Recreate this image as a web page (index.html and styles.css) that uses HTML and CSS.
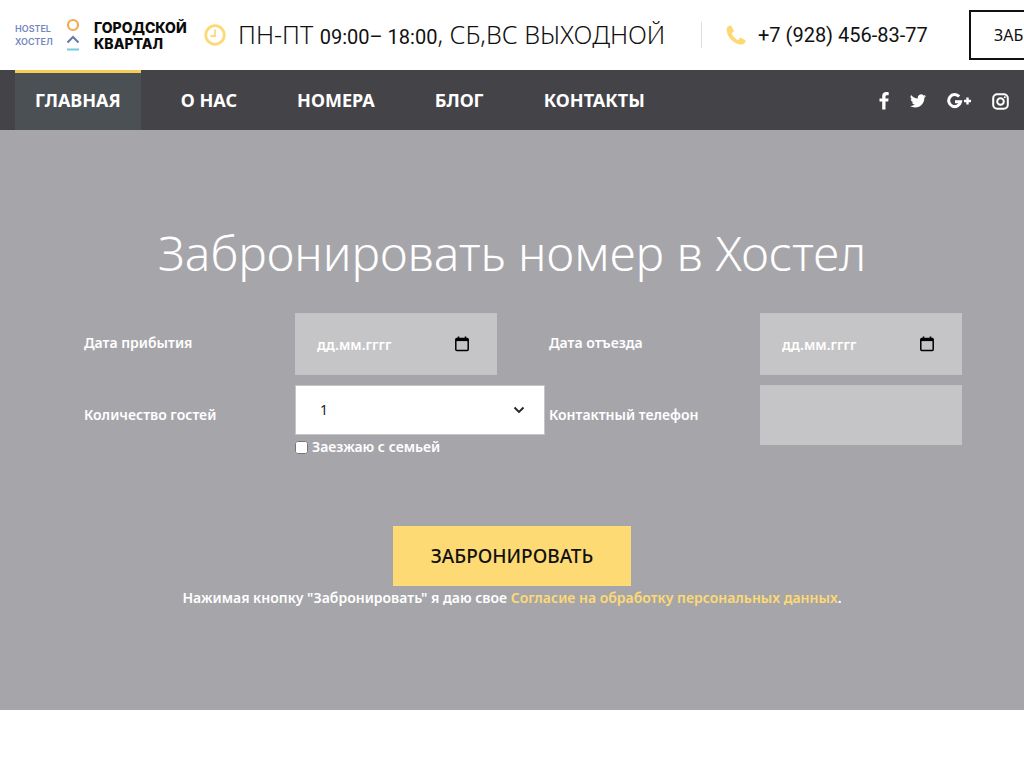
FILE: index.html
```html
<!DOCTYPE html>
<html lang="ru">
<head>
<meta charset="utf-8">
<meta name="viewport" content="width=device-width, initial-scale=1">
<title>Городской квартал</title>
<link rel="stylesheet" href="styles.css">
</head>
<body>
<header class="topbar">
  <a class="logo" href="#">
    <span class="logo-small"><span>HOSTEL</span><span>ХОСТЕЛ</span></span>
    <svg class="logo-mark" viewBox="0 0 14 34" fill="none" aria-hidden="true">
      <circle cx="7" cy="7" r="5" stroke="#f5a94a" stroke-width="2.2"/>
      <path d="M1.5 24.5 7 19l5.500 5.500" stroke="#6478ae" stroke-width="2"/>
      <path d="M1 31.500h12" stroke="#76c9de" stroke-width="2"/>
    </svg>
    <span class="logo-name"><span>ГОРОДСКОЙ</span><span>КВАРТАЛ</span></span>
  </a>
  <div class="hours">
    <svg class="icon-clock" viewBox="0 0 22 22" fill="none" stroke="#fdd975" aria-hidden="true">
      <circle cx="11" cy="11" r="9.300" stroke-width="2.800"/>
      <path d="M11 5.500V12H6.500" stroke-width="1.800"/>
    </svg>
    <span class="hours-text">ПН-ПТ <span class="digits">09:00– 18:00</span>, СБ,ВС ВЫХОДНОЙ</span>
  </div>
  <a class="phone" href="tel:+79284568377">
    <svg class="icon-phone" viewBox="0 0 20 20" fill="#fdd975" aria-hidden="true">
      <path d="M4.300.500C2.200.700.700 2.200.600 4.500c-.1 7.500 7.500 15 15 15 2 0 3.600-1.300 4-3.500.1-.5-.1-.9-.5-1.100l-3.800-2c-.5-.3-.9-.2-1.300.2l-1.500 1.700c-.4.400-.8.400-1.200.1C9.200 13.500 7 11.300 5.800 9.100c-.2-.4-.2-.8.200-1.100l1.500-1.300c.4-.4.500-.8.300-1.300L5.400 1.100C5.200.600 4.800.500 4.300.500z"/>
    </svg>
    <span class="digits">+7 (928) 456-83-77</span>
  </a>
  <button class="book-top" type="button">ЗАБРОНИРОВАТЬ</button>
</header>
<nav class="nav">
  <ul class="menu">
    <li><a class="menu-link active" href="#">ГЛАВНАЯ</a></li>
    <li><a class="menu-link" href="#">О НАС</a></li>
    <li><a class="menu-link" href="#">НОМЕРА</a></li>
    <li><a class="menu-link" href="#">БЛОГ</a></li>
    <li><a class="menu-link" href="#">КОНТАКТЫ</a></li>
  </ul>
  <div class="social">
    <a href="#" aria-label="Facebook"><svg width="10" height="18" viewBox="0 0 10 18" fill="#fff"><path d="M9.700.200v3H8c-1.200 0-1.500.6-1.500 1.500v1.800h3.100l-.4 3H6.500V17.500H3.200V9.500H.500v-3h2.700V4.100C3.200 1.500 4.800.100 7.300.100c1 0 1.900 0 2.400.1z"/></svg></a>
    <a href="#" aria-label="Twitter"><svg width="16" height="14" viewBox="0 0 24 20" fill="#fff"><path d="M24 2.400a10 10 0 0 1-2.800.8A5 5 0 0 0 23.300.500a10 10 0 0 1-3.100 1.200 4.900 4.900 0 0 0-8.400 4.500A14 14 0 0 1 1.700 1a4.900 4.900 0 0 0 1.500 6.600A5 5 0 0 1 1 7v.1a4.900 4.900 0 0 0 3.900 4.800 5 5 0 0 1-2.200.1 4.900 4.900 0 0 0 4.600 3.400A9.900 9.900 0 0 1 0 17.500 14 14 0 0 0 7.500 19.700c9.100 0 14-7.500 14-14V5A10 10 0 0 0 24 2.400z"/></svg></a>
    <a href="#" aria-label="Google+"><svg width="24" height="16" viewBox="0 0 24 16" fill="none" stroke="#fff"><path d="M12.200 3.600A6 6 0 1 0 13.600 8.800H8" stroke-width="3"/><path d="M17 8h7M20.500 4.500v7" stroke-width="2.400"/></svg></a>
    <a href="#" aria-label="Instagram"><svg width="17" height="17" viewBox="0 0 17 17" fill="none" stroke="#fff"><rect x="1.200" y="1.200" width="14.600" height="14.600" rx="4" stroke-width="2"/><circle cx="8.500" cy="8.500" r="3.300" stroke-width="2"/><circle cx="12.800" cy="4.200" r="1" fill="#fff" stroke="none"/></svg></a>
  </div>
</nav>
<main class="hero">
  <h1 class="title">Забронировать номер в Хостел</h1>
  <form class="form">
    <div class="grid">
      <label class="caption" for="arrive">Дата прибытия</label>
      <div class="date">
        <input class="field" id="arrive" type="text" placeholder="дд.мм.гггг">
        <button class="cal" type="button" aria-label="Выбрать дату прибытия"><svg width="14" height="16" viewBox="0 0 14 16" fill="none" stroke="#000"><rect x=".8" y="2.500" width="12.400" height="12" rx="1" stroke-width="1.500"/><path d="M1 3.800h12" stroke-width="2.600"/><path d="M3.500.500v3M10.500.500v3" stroke-width="1.600"/></svg></button>
      </div>
      <label class="caption" for="leave">Дата отъезда</label>
      <div class="date">
        <input class="field" id="leave" type="text" placeholder="дд.мм.гггг">
        <button class="cal" type="button" aria-label="Выбрать дату отъезда"><svg width="14" height="16" viewBox="0 0 14 16" fill="none" stroke="#000"><rect x=".8" y="2.500" width="12.400" height="12" rx="1" stroke-width="1.500"/><path d="M1 3.800h12" stroke-width="2.600"/><path d="M3.500.500v3M10.500.500v3" stroke-width="1.600"/></svg></button>
      </div>
      <label class="caption" for="guests">Количество гостей</label>
      <div class="guests">
        <div class="select-wrap">
          <select class="select" id="guests"><option>1</option><option>2</option><option>3</option><option>4</option></select>
          <svg class="chevron" width="12" height="8" viewBox="0 0 12 8" fill="none" stroke="#222" stroke-width="1.800" aria-hidden="true"><path d="M1.500 1.500 6 6l4.500-4.500"/></svg>
        </div>
        <label class="check" for="family"><input id="family" type="checkbox">Заезжаю с семьей</label>
      </div>
      <label class="caption" for="tel">Контактный телефон</label>
      <input class="field tel" id="tel" type="tel">
    </div>
    <button class="submit" type="submit">ЗАБРОНИРОВАТЬ</button>
    <p class="consent">Нажимая кнопку "Забронировать" я даю свое <a href="#">Согласие на обработку персональных данных</a>.</p>
  </form>
</main>
</body>
</html>
```

FILE: styles.css
```css
* { box-sizing: border-box; }
body {
  margin: 0;
  background: #fff;
  color: #111;
  font-family: "Noto Sans", "Open Sans", sans-serif;
  font-size: 14px;
  font-weight: 600;
  line-height: 24px;
}
a { color: inherit; text-decoration: none; }
button, input, select { font: inherit; }

.topbar {
  display: flex;
  align-items: center;
  height: 70px;
  padding: 0 15px;
  overflow: hidden;
  white-space: nowrap;
}
.topbar > * { flex: none; }
.logo { display: flex; align-items: center; width: 189px; }
.logo-small {
  display: flex;
  flex-direction: column;
  width: 51px;
  color: #7187bd;
  font: 600 9px/13px Inter, sans-serif;
}
.logo-mark { width: 14px; height: 34px; margin-right: 14px; }
.logo-name {
  display: flex;
  flex-direction: column;
  padding-top: 2px;
  color: #0b0b0b;
  font: 800 14px/16px Inter, sans-serif;
}
.hours { display: flex; align-items: center; gap: 12px; width: 498px; border-right: 1px solid #ddd; height: 26px; }
.icon-clock { width: 22px; height: 22px; }
.hours-text { font-size: 25px; font-weight: 300; line-height: 26px; }
.digits { font-family: Roboto, sans-serif; font-size: 20px; font-weight: 400; }
.phone { display: flex; align-items: center; gap: 12px; width: 243px; margin-left: 24px; }
.icon-phone { width: 20px; height: 20px; }
.book-top {
  height: 50px;
  padding: 0 23px;
  border: 2px solid #111;
  background: #fff;
  color: #111;
  font-size: 16px;
  font-weight: 400;
}

.nav {
  display: flex;
  justify-content: space-between;
  align-items: center;
  padding: 0 15px;
  background: #444348;
  color: #fff;
}
.menu { display: flex; gap: 20px; margin: 0; padding: 0; list-style: none; }
.menu-link {
  display: block;
  padding: 0 20px 2px;
  border-top: 3px solid transparent;
  font-size: 18px;
  font-weight: 700;
  line-height: 55px;
}
.active { border-top-color: #f8cc55; background: #4b5054; }
.social { display: flex; align-items: center; gap: 21px; padding-top: 2px; }
.social a { display: flex; }

.hero { padding: 92px 20px 100px; background: #a6a6aa; color: #fff; text-align: center; }
.title { margin: 0; font-size: 48px; font-weight: 300; line-height: 62px; }
.form { max-width: 902px; margin: 29px auto 0; }
.grid {
  display: grid;
  grid-template-columns: 211px 1fr 211px 202px;
  row-gap: 10px;
  align-items: start;
  padding: 0 1px 0 23px;
  text-align: left;
}
.caption { line-height: 60px; }
.date { position: relative; width: 202px; }
.field {
  display: block;
  width: 100%;
  height: 62px;
  padding: 0 22px;
  border: 0;
  border-radius: 0;
  background: #c5c5c7;
  color: #fff;
}
.field::placeholder { color: #fff; opacity: 1; }
.cal {
  position: absolute;
  top: 50%;
  right: 28px;
  display: flex;
  padding: 0;
  border: 0;
  background: none;
  transform: translateY(-50%);
}
.tel { height: 60px; }
.select-wrap { position: relative; width: 250px; }
.select {
  appearance: none;
  display: block;
  width: 100%;
  height: 50px;
  padding: 0 24px;
  border: 1px solid #c5c5c7;
  border-radius: 0;
  background: #fff;
  color: #222;
  font-weight: 400;
}
.chevron { position: absolute; top: 21px; right: 20px; pointer-events: none; }
.check { display: flex; align-items: center; gap: 4px; }
.check input { width: 13px; height: 13px; margin: 0; }
.submit {
  height: 60px;
  min-width: 238px;
  margin-top: 67px;
  padding: 0 32px;
  border: 0;
  background: #fdda73;
  color: #111;
  font-size: 19px;
  font-weight: 500;
}
.consent { margin: 0; }
.consent a { color: #fdda73; }
```
